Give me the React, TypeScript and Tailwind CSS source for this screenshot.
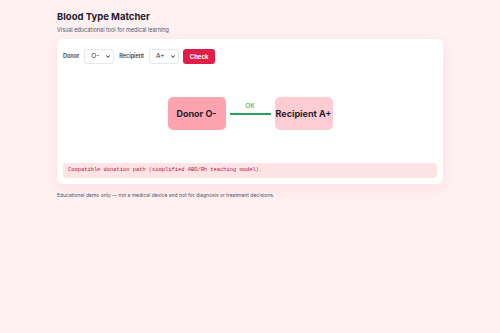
import { useState } from "react";

const TYPES = ["O-", "O+", "A-", "A+", "B-", "B+", "AB-", "AB+"];

function Select({ value, onChange }: { value: string; onChange: (v: string) => void }) {
  return (
    <div className="relative flex">
      <select
        value={value}
        onChange={(e) => onChange(e.target.value)}
        className="block appearance-none w-[30px] h-[15px] border border-[#e5e7eb] rounded-[3px] bg-white pl-[6px] py-0 text-[6.5px] leading-[13px] text-[#1f2937] outline-none"
      >
        {TYPES.map((t) => (
          <option key={t}>{t}</option>
        ))}
      </select>
      <svg
        className="absolute right-[4px] top-[6px] w-[4px] h-[3px] pointer-events-none"
        viewBox="0 0 4 3"
      >
        <path d="M0.3 0.4 L2 2.4 L3.7 0.4" fill="none" stroke="#111827" strokeWidth="0.9" />
      </svg>
    </div>
  );
}

export default function App() {
  const [donor, setDonor] = useState("O-");
  const [recipient, setRecipient] = useState("A+");

  return (
    <div
      className="min-h-[333px] bg-[#fff0f1] pt-[11px]"
      style={{ fontFamily: "Inter, 'Noto Sans', sans-serif" }}
    >
      <div className="max-w-[386px] mx-auto">
        <h1 className="text-[9.5px] font-bold text-[#1e1b2e] leading-[12px]">Blood Type Matcher</h1>
        <p className="text-[5.5px] text-[#4b5563] mt-[3px] leading-[8px]">
          Visual educational tool for medical learning
        </p>

        <div className="mt-[5px] bg-white rounded-[6px] shadow-[0_4px_14px_rgba(225,29,72,0.08)] px-[6px] pt-[10px] pb-[6px]">
          <div className="flex items-center gap-[4px] h-[15px]">
            <span className="text-[5.5px] font-semibold text-[#374151] mr-[1px]">Donor</span>
            <Select value={donor} onChange={setDonor} />
            <span className="text-[5.5px] font-semibold text-[#374151] ml-[1px] mr-[1px]">Recipient</span>
            <Select value={recipient} onChange={setRecipient} />
            <button className="w-[32px] h-[15px] rounded-[3px] bg-[#e11d48] text-white text-[6px] font-bold">
              Check
            </button>
          </div>

          <div className="h-[99px] flex items-center justify-center gap-[4px]">
            <div className="w-[58px] h-[33px] rounded-[5px] bg-[#fda4af] flex items-center justify-center text-[9px] font-bold text-[#1f1d2b]">
              Donor {donor}
            </div>
            <div className="flex flex-col items-center w-[41px]">
              <span className="text-[6.5px] text-[#22a34a] leading-[8px] mb-[3px] -mt-[11px]">OK</span>
              <div className="w-[41px] h-[2px] bg-[#22a55a]" />
            </div>
            <div className="w-[58px] h-[33px] rounded-[5px] bg-[#fecdd3] flex items-center justify-center text-[9px] font-bold text-[#1f1d2b]">
              Recipient {recipient}
            </div>
          </div>

          <div
            className="h-[15px] rounded-[3px] bg-[#ffe4e6] flex items-center px-[5px] text-[5.4px] text-[#be123c]"
            style={{ fontFamily: "'Liberation Mono', 'DejaVu Sans Mono', monospace" }}
          >
            Compatible donation path (simplified ABO/Rh teaching model).
          </div>
        </div>

        <p className="mt-[8px] text-[5px] text-[#4b5563] leading-[7px]">
          Educational demo only — not a medical device and not for diagnosis or treatment decisions.
        </p>
      </div>
    </div>
  );
}
